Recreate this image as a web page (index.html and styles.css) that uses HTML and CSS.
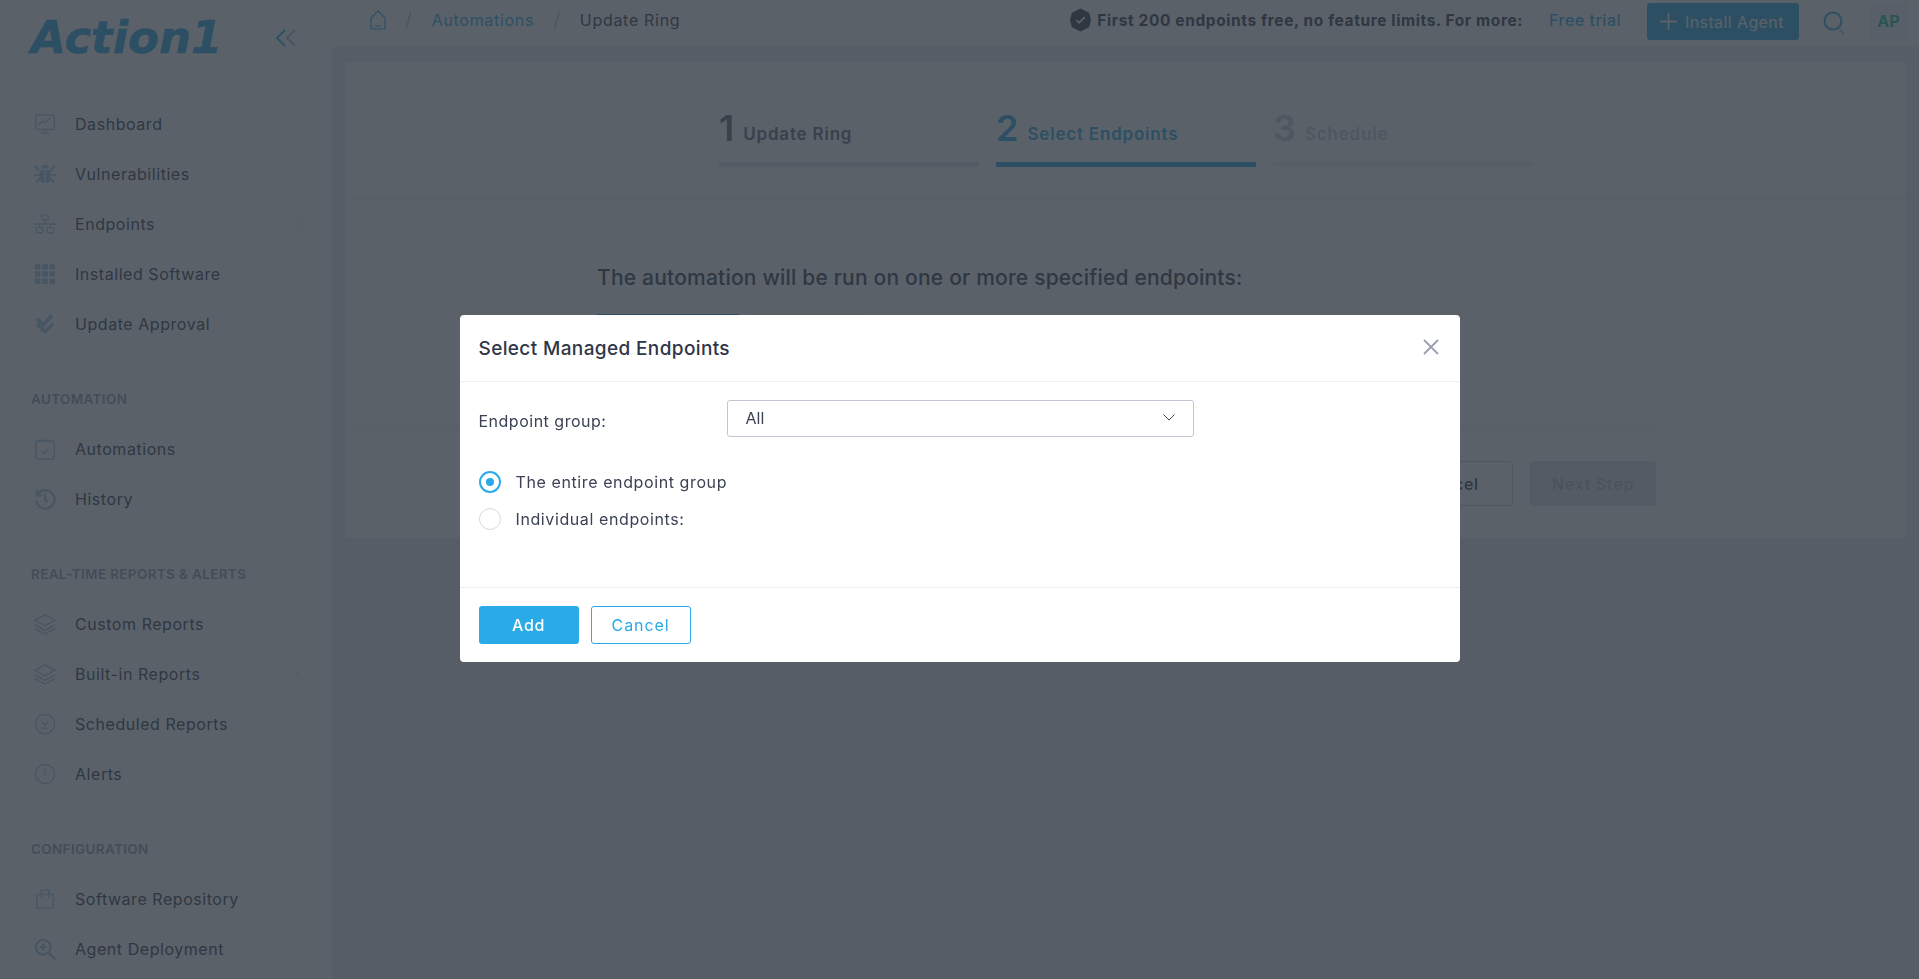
FILE: index.html
```html
<!DOCTYPE html>
<html lang="en">
<head>
    <meta charset="UTF-8">
    <meta name="viewport" content="width=device-width, initial-scale=1.0">
    <title>Update Ring</title>
    <link rel="stylesheet" href="styles.css">
</head>
<body>
    <div class="app">
        <aside class="sidebar">
            <div class="logo-row">
                <div class="logo">Action1</div>
                <svg class="collapse" viewBox="0 0 22 20" fill="none" stroke-width="2"><path d="M10 2 2 10l8 8" stroke="#2aaae6"/><path d="M20 2l-8 8 8 8" stroke="#a8c4d8"/></svg>
            </div>
            <nav class="nav">
                <a class="nav-item"><svg viewBox="0 0 24 24" class="ico line"><rect x="2" y="2" width="20" height="16" rx="1.5"/><path d="M5 13l4-4 3 2 6-6M12 18v3M7 22h10"/></svg>Dashboard</a>
                <a class="nav-item"><svg viewBox="0 0 24 24" class="ico solid"><path d="M8 6a4 4 0 0 1 8 0z"/><path d="M6 7.500h5.300V22C8 22 6 20 6 17zM18 7.500h-5.300V22c3.300 0 5.300-2 5.300-5z"/><path d="M1 3h2l3 4v2H4L1 5zM23 3h-2l-3 4v2h2l3-4zM0 12h6v2H0zM18 12h6v2h-6zM1 21l4-5h2l-1 3-3 3zM23 21l-4-5h-2l1 3 3 3z"/></svg>Vulnerabilities</a>
                <a class="nav-item"><svg viewBox="0 0 24 24" class="ico line"><rect x="8.500" y="2" width="7" height="5.500" rx=".8"/><rect x="2.500" y="16" width="7" height="5.500" rx=".8"/><rect x="14.500" y="16" width="7" height="5.500" rx=".8"/><path d="M12 7.500v4.500M0 12h24M6 12v4M18 12v4"/></svg>Endpoints<svg class="caret" viewBox="0 0 8 12"><path d="M1 1l5 5-5 5"/></svg></a>
                <a class="nav-item"><svg viewBox="0 0 24 24" class="ico solid"><path d="M1 1h6v6H1zM9 1h6v6H9zM17 1h6v6h-6zM1 9h6v6H1zM9 9h6v6H9zM17 9h6v6h-6zM1 17h6v6H1zM9 17h6v6H9zM17 17h6v6h-6z"/></svg>Installed Software</a>
                <a class="nav-item"><svg viewBox="0 0 24 24" class="ico solid"><path d="M2 8l3-3 5 5 8-9 3 3-11 12z"/><path d="M2 14l3-3 7 7 8-8 2 3-10 10z"/></svg>Update Approval</a>

                <div class="nav-title">AUTOMATION</div>
                <a class="nav-item"><svg viewBox="0 0 24 24" class="ico line"><rect x="2" y="3" width="20" height="20" rx="2.500"/><path d="M7 1v4M12 1v4M17 1v4M8 14l3 3 5-6"/></svg>Automations</a>
                <a class="nav-item"><svg viewBox="0 0 24 24" class="ico line thick"><path d="M4 7a10 10 0 1 1-1.500 7M3 2v6h6"/><path d="M12 7v6l3 2"/></svg>History</a>

                <div class="nav-title">REAL-TIME REPORTS &amp; ALERTS</div>
                <a class="nav-item"><svg viewBox="0 0 24 24" class="ico line"><path d="M12 2l11 6-11 6L1 8zM1 13l11 6 11-6M1 17l11 6 11-6"/></svg>Custom Reports</a>
                <a class="nav-item"><svg viewBox="0 0 24 24" class="ico line"><path d="M12 2l11 6-11 6L1 8zM1 13l11 6 11-6M1 17l11 6 11-6"/></svg>Built-in Reports<svg class="caret" viewBox="0 0 8 12"><path d="M1 1l5 5-5 5"/></svg></a>
                <a class="nav-item"><svg viewBox="0 0 24 24" class="ico line"><circle cx="12" cy="12" r="10.500"/><path d="M8 9l4 4 4-4M8 16.500h8"/></svg>Scheduled Reports</a>
                <a class="nav-item"><svg viewBox="0 0 24 24" class="ico line"><circle cx="12" cy="12" r="10.500"/><path d="M12 6.500v7M12 16.500v1.500"/></svg>Alerts</a>

                <div class="nav-title">CONFIGURATION</div>
                <a class="nav-item"><svg viewBox="0 0 24 24" class="ico line"><path d="M3 7h18v15H3zM8 7V2h8v5M8 7v4M16 7v4"/></svg>Software Repository</a>
                <a class="nav-item"><svg viewBox="0 0 24 24" class="ico line thick"><circle cx="10" cy="10" r="8"/><path d="M16 16l7 7M10 6v8M6 10h8"/></svg>Agent Deployment</a>
            </nav>
        </aside>

        <div class="main">
            <header class="topbar">
                <div class="crumbs">
                    <svg class="home" viewBox="0 0 16 20" fill="none"><path d="M1 8l7-7 7 7v11H1zM5 16h6"/></svg>
                    <span class="sep">/</span>
                    <a class="crumb-link">Automations</a>
                    <span class="sep">/</span>
                    <span>Update Ring</span>
                </div>
                <div class="notice">
                    <svg viewBox="0 0 22 24" class="badge"><path d="M11 0l9 4.500 2 7.500-2 7.500L11 24l-9-4.500L0 12l2-7.500z" fill="#333a4a"/><path d="M6.500 12l3 3 6-6" fill="none" stroke="#fff" stroke-width="1.800"/></svg>
                    <b>First 200 endpoints free, no feature limits. For more:</b>
                </div>
                <a class="trial">Free trial</a>
                <button class="install"><svg class="plus" viewBox="0 0 17 17"><path d="M8.500 0v17M0 8.500h17"/></svg>Install Agent</button>
                <svg class="search" viewBox="0 0 22 26" fill="none"><circle cx="10" cy="11" r="8.500" stroke="#2aaae6" stroke-width="2"/><path d="M16 18l5 6" stroke="#b9c7d4" stroke-width="2"/></svg>
                <div class="avatar">AP</div>
            </header>

            <div class="content">
                <section class="card">
                    <div class="steps">
                        <div class="step done"><span class="num">1</span><span class="step-name">Update Ring</span></div>
                        <div class="step active"><span class="num">2</span><span class="step-name">Select Endpoints</span></div>
                        <div class="step todo"><span class="num">3</span><span class="step-name">Schedule</span></div>
                    </div>
                    <div class="card-body">
                        <h2 class="lead">The automation will be run on one or more specified endpoints:</h2>
                        <div class="choice-row">
                            <span class="choice on"></span>
                            <span class="choice"></span>
                        </div>
                    </div>
                    <div class="card-foot">
                        <button class="btn-ghost">Cancel</button>
                        <button class="btn-next">Next Step</button>
                    </div>
                </section>
            </div>
        </div>
    </div>

    <div class="overlay">
        <div class="modal">
            <div class="modal-head">
                <span class="modal-title">Select Managed Endpoints</span>
                <svg class="close" viewBox="0 0 16 16"><path d="M1 1l14 14M15 1L1 15"/></svg>
            </div>
            <div class="modal-body">
                <div class="field">
                    <label class="field-label">Endpoint group:</label>
                    <div class="select">
                        <span>All</span>
                        <svg viewBox="0 0 12 7"><path d="M.5.5 6 6 11.500.5"/></svg>
                    </div>
                </div>
                <div class="radios">
                    <label class="radio-row"><span class="radio checked"></span>The entire endpoint group</label>
                    <label class="radio-row"><span class="radio"></span>Individual endpoints:</label>
                </div>
            </div>
            <div class="modal-foot">
                <button class="btn-add">Add</button>
                <button class="btn-cancel">Cancel</button>
            </div>
        </div>
    </div>
</body>
</html>
```

FILE: styles.css
```css
* {
    box-sizing: border-box;
}
html, body {
    height: 100%;
}
body {
    margin: 0;
    font-family: Inter, "Liberation Sans", sans-serif;
    color: #333a4a;
    background: #f1f3f6;
    overflow: hidden;
}
.app {
    display: flex;
    height: 100vh;
}

/* sidebar */
.sidebar {
    width: 332px;
    flex: none;
    background: #fff;
    padding: 0 31px;
    overflow: hidden;
}
.logo-row {
    display: flex;
    align-items: center;
    justify-content: space-between;
    height: 76px;
    padding-right: 4px;
}
.logo {
    font-family: "DejaVu Sans", sans-serif;
    font-weight: 700;
    font-style: italic;
    font-size: 45px;
    color: #2aaae6;
    -webkit-text-stroke: .6px #2aaae6;
    line-height: 40px;
}
.collapse {
    width: 22px;
    height: 20px;
}
.nav {
    padding-top: 23px;
}
.nav-item {
    display: flex;
    align-items: center;
    height: 50px;
    font-size: 16px;
    color: #333a4a;
    letter-spacing: .55px;
}
.ico {
    width: 22px;
    height: 22px;
    margin: 0 19px 0 3px;
    flex: none;
}
.ico.line {
    fill: none;
    stroke: #a8c8dc;
    stroke-width: 1.500;
}
.ico.thick {
    stroke-width: 2.600;
}
.ico.solid {
    fill: #a8c8dc;
}
.caret {
    width: 6px;
    height: 10px;
    margin-left: auto;
    margin-right: 1px;
    fill: none;
    stroke: #c4ced8;
    stroke-width: 1.200;
}
.nav-title {
    height: 75px;
    padding-top: 41px;
    padding-bottom: 9px;
    font-size: 13.500px;
    font-weight: 600;
    line-height: 18px;
    color: #959cab;
    letter-spacing: .35px;
}

/* top bar */
.main {
    flex: 1;
    display: flex;
    flex-direction: column;
    min-width: 0;
}
.topbar {
    height: 47px;
    flex: none;
    background: #fff;
    display: flex;
    align-items: flex-start;
    padding: 3px 12px 0 38px;
    font-size: 16px;
    letter-spacing: .7px;
}
.crumbs {
    display: flex;
    align-items: center;
    height: 34px;
    margin-right: auto;
}
.home {
    width: 16px;
    height: 20px;
    stroke: #2aaae6;
    stroke-width: 1.200;
}
.sep {
    color: #b5bcc7;
    margin: 0 19px;
    font-size: 20px;
    font-weight: 300;
}
.crumb-link {
    color: #2aaae6;
}
.notice {
    display: flex;
    align-items: center;
    height: 34px;
    font-size: 15.500px;
    letter-spacing: .6px;
}
.notice b {
    font-weight: 700;
}
.badge {
    width: 21px;
    height: 24px;
    margin-right: 6px;
}
.trial {
    height: 34px;
    line-height: 34px;
    margin: 0 26px 0 26px;
    color: #2aaae6;
    font-weight: 500;
    letter-spacing: .5px;
}
.install {
    width: 152px;
    height: 37px;
    padding: 0 0 0 13px;
    border: none;
    border-radius: 3px;
    background: #2aaae6;
    color: #fff;
    font: 16px Inter, sans-serif;
    letter-spacing: .4px;
    display: flex;
    align-items: center;
    gap: 8px;
}
.plus {
    width: 17px;
    height: 17px;
    fill: none;
    stroke: #fff;
    stroke-width: 1.800;
}
.search {
    width: 22px;
    height: 26px;
    margin: 7px 25px 0 24px;
}
.avatar {
    width: 37px;
    height: 37px;
    background: #f4f6f8;
    color: #1ec08a;
    font-weight: 700;
    font-size: 16px;
    letter-spacing: 0;
    text-align: center;
    line-height: 37px;
}

/* wizard card behind */
.content {
    flex: 1;
    padding: 15px 13px 0;
    background: #ebedf0;
}
.card {
    height: 476px;
    background: #fff;
    display: flex;
    flex-direction: column;
}
.steps {
    display: flex;
    gap: 17px;
    height: 138px;
    padding: 41px 0 0 374px;
    border-bottom: 1px solid #f0f2f5;
}
.step {
    width: 260px;
    height: 64px;
    display: flex;
    align-items: center;
    gap: 9px;
    border-bottom: 5px solid #e2e6ea;
    color: #8b93a3;
    padding-bottom: 6px;
}
.step.done {
    color: #5f6776;
}
.step.active {
    color: #2aaae6;
    border-color: #2aaae6;
}
.step.todo {
    color: #c4c9d2;
    border-color: #eceff2;
}
.num {
    font-size: 36px;
    font-weight: 600;
    line-height: 40px;
    margin-top: -3px;
}
.step-name {
    font-size: 17px;
    font-weight: 600;
    letter-spacing: .8px;
    margin-top: 8px;
}
.card-body {
    height: 228px;
    padding-left: 252px;
    border-bottom: 1px solid #f0f2f5;
    margin-right: 250px;
}
.lead {
    margin: 63px 0 21px;
    font-size: 21px;
    font-weight: 500;
    letter-spacing: .2px;
    line-height: 30px;
}
.choice-row {
    display: flex;
    gap: 16px;
}
.choice {
    width: 110px;
    height: 40px;
    border: 1px solid #e2e6ea;
}
.choice.on {
    width: 142px;
    border-color: #2aaae6;
}
.card-foot {
    display: flex;
    justify-content: flex-end;
    gap: 17px;
    padding: 33px 250px 0 0;
}
.card-foot button {
    width: 126px;
    height: 45px;
    border-radius: 3px;
    font: 500 16px Inter, sans-serif;
    letter-spacing: .8px;
}
.btn-ghost {
    background: #fff;
    border: 1px solid #c4ccd6;
    color: #333a4a;
}
.btn-next {
    background: #dfe3e8;
    border: none;
    color: #b5bcc7;
}

/* dialog */
.overlay {
    position: fixed;
    inset: 0;
    padding-bottom: 2px;
    background: rgba(46, 55, 65, .79);
    display: flex;
    align-items: center;
    justify-content: center;
}
.modal {
    width: 1000px;
    height: 347px;
    background: #fff;
    border-radius: 4px;
    display: flex;
    flex-direction: column;
}
.modal-head {
    height: 67px;
    flex: none;
    display: flex;
    align-items: center;
    justify-content: space-between;
    padding: 0 21px 0 19px;
    border-bottom: 1px solid #eceef2;
}
.modal-title {
    font-size: 19px;
    font-weight: 500;
    color: #2f3648;
    letter-spacing: .37px;
}
.close {
    width: 16px;
    height: 16px;
    margin-top: -2px;
    fill: none;
    stroke: #9a9fb0;
    stroke-width: 1.800;
}
.modal-body {
    flex: 1;
    padding: 18px 19px 0;
}
.field {
    display: flex;
    align-items: center;
    height: 37px;
}
.field-label {
    width: 248px;
    font-size: 16px;
    letter-spacing: .5px;
    padding-top: 5px;
    color: #3b4254;
}
.select {
    width: 467px;
    height: 37px;
    display: flex;
    align-items: center;
    justify-content: space-between;
    padding: 0 18px 2px;
    border: 1px solid #c7c3d4;
    border-radius: 3px;
    font-size: 16px;
    color: #3b4254;
}
.select svg {
    width: 12px;
    height: 7px;
    fill: none;
    stroke: #444b5c;
    stroke-width: 1;
}
.radios {
    display: flex;
    flex-direction: column;
    gap: 15px;
    padding-top: 34px;
}
.radio-row {
    display: flex;
    align-items: center;
    gap: 15px;
    height: 22px;
    font-size: 16px;
    color: #3b4254;
    letter-spacing: .6px;
}
.radio {
    width: 22px;
    height: 22px;
    border: 1px solid #d5d8e2;
    border-radius: 50%;
    display: flex;
    align-items: center;
    justify-content: center;
}
.radio.checked {
    border: 2px solid #2aaae6;
}
.radio.checked::after {
    content: "";
    width: 8px;
    height: 8px;
    border-radius: 50%;
    background: #2aaae6;
}
.modal-foot {
    height: 75px;
    flex: none;
    display: flex;
    gap: 12px;
    padding: 18px 19px 0;
    border-top: 1px solid #eceef4;
}
.modal-foot button {
    width: 100px;
    height: 38px;
    border-radius: 3px;
    font: 500 16px Inter, sans-serif;
    letter-spacing: .6px;
}
.btn-add {
    background: #2aaae6;
    border: none;
    color: #fff;
}
.btn-cancel {
    background: #fff;
    border: 1px solid #2aaae6;
    color: #2aaae6;
    font-weight: 400 !important;
    letter-spacing: .9px !important;
}
```
